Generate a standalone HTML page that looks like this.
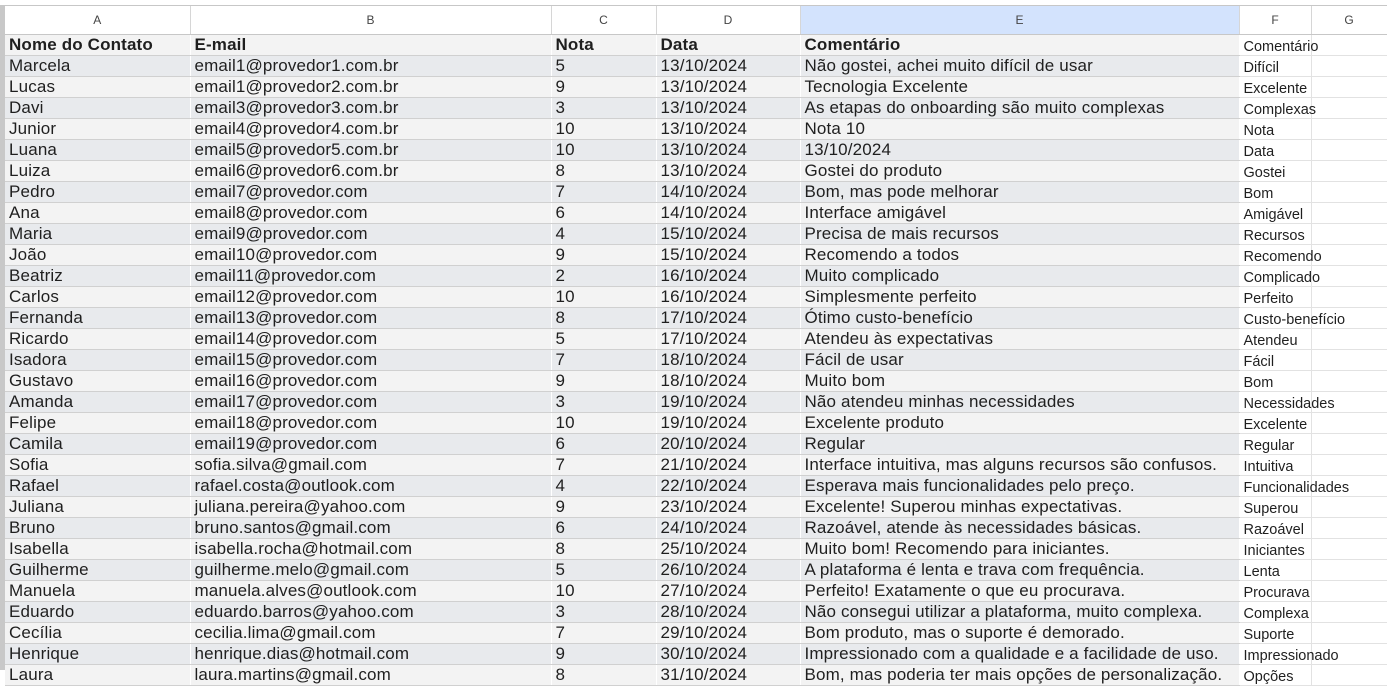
<!DOCTYPE html>
<html><head><meta charset="utf-8"><style>
body{margin:0;width:1387px;height:670px;overflow:hidden;background:#fff;font-family:"Liberation Sans",Arial,sans-serif;position:relative}
.strip{position:absolute;left:0;top:6px;width:5px;height:664px;background:#c8c8c8}
.top{position:absolute;left:0;top:5px;width:1387px;height:1px;background:#c7c7c7}
table{position:absolute;left:5px;top:6px;border-collapse:collapse;table-layout:fixed;width:1382px}
td{padding:0 0 0 4px;height:20px;border-bottom:1px solid #d0d0d0;border-right:1px solid #fff;white-space:nowrap;overflow:visible;font-size:17px;letter-spacing:0.15px;color:#1f1f1f;line-height:20px;box-sizing:content-box}
tr.h td{height:28px;font-size:12px;letter-spacing:0;color:#444;text-align:center;border-right:1px solid #d6d6d6;border-bottom:1px solid #c7c7c7;background:#fff;padding:0;line-height:28px}
tr.h td.sel{background:#d3e3fd}
tr.t td{background:#f3f3f3;font-weight:bold}
tr.o td{background:#e8eaed}
tr.e td{background:#f3f3f3}
td.f{background:#fff!important;font-size:14.5px;letter-spacing:0;font-weight:normal!important;border-bottom:1px solid #e2e2e2;border-right:1px solid #e2e2e2;line-height:20px}
td.f span{position:relative;top:2px}
td.g{background:#fff!important;border-bottom:1px solid #e2e2e2;border-right:none}
</style></head><body>
<div class="top"></div><div class="strip"></div>
<table>
<colgroup><col style="width:185px"><col style="width:361px"><col style="width:105px"><col style="width:144px"><col style="width:439px"><col style="width:72px"><col style="width:76px"></colgroup>
<tr class="h"><td>A</td><td>B</td><td>C</td><td>D</td><td class="sel">E</td><td>F</td><td>G</td></tr>
<tr class="t"><td>Nome do Contato</td><td>E-mail</td><td>Nota</td><td>Data</td><td>Comentário</td><td class="f"><span>Comentário</span></td><td class="g"></td></tr>
<tr class="o"><td>Marcela</td><td>email1@provedor1.com.br</td><td>5</td><td>13/10/2024</td><td>Não gostei, achei muito difícil de usar</td><td class="f"><span>Difícil</span></td><td class="g"></td></tr>
<tr class="e"><td>Lucas</td><td>email1@provedor2.com.br</td><td>9</td><td>13/10/2024</td><td>Tecnologia Excelente</td><td class="f"><span>Excelente</span></td><td class="g"></td></tr>
<tr class="o"><td>Davi</td><td>email3@provedor3.com.br</td><td>3</td><td>13/10/2024</td><td>As etapas do onboarding são muito complexas</td><td class="f"><span>Complexas</span></td><td class="g"></td></tr>
<tr class="e"><td>Junior</td><td>email4@provedor4.com.br</td><td>10</td><td>13/10/2024</td><td>Nota 10</td><td class="f"><span>Nota</span></td><td class="g"></td></tr>
<tr class="o"><td>Luana</td><td>email5@provedor5.com.br</td><td>10</td><td>13/10/2024</td><td>13/10/2024</td><td class="f"><span>Data</span></td><td class="g"></td></tr>
<tr class="e"><td>Luiza</td><td>email6@provedor6.com.br</td><td>8</td><td>13/10/2024</td><td>Gostei do produto</td><td class="f"><span>Gostei</span></td><td class="g"></td></tr>
<tr class="o"><td>Pedro</td><td>email7@provedor.com</td><td>7</td><td>14/10/2024</td><td>Bom, mas pode melhorar</td><td class="f"><span>Bom</span></td><td class="g"></td></tr>
<tr class="e"><td>Ana</td><td>email8@provedor.com</td><td>6</td><td>14/10/2024</td><td>Interface amigável</td><td class="f"><span>Amigável</span></td><td class="g"></td></tr>
<tr class="o"><td>Maria</td><td>email9@provedor.com</td><td>4</td><td>15/10/2024</td><td>Precisa de mais recursos</td><td class="f"><span>Recursos</span></td><td class="g"></td></tr>
<tr class="e"><td>João</td><td>email10@provedor.com</td><td>9</td><td>15/10/2024</td><td>Recomendo a todos</td><td class="f"><span>Recomendo</span></td><td class="g"></td></tr>
<tr class="o"><td>Beatriz</td><td>email11@provedor.com</td><td>2</td><td>16/10/2024</td><td>Muito complicado</td><td class="f"><span>Complicado</span></td><td class="g"></td></tr>
<tr class="e"><td>Carlos</td><td>email12@provedor.com</td><td>10</td><td>16/10/2024</td><td>Simplesmente perfeito</td><td class="f"><span>Perfeito</span></td><td class="g"></td></tr>
<tr class="o"><td>Fernanda</td><td>email13@provedor.com</td><td>8</td><td>17/10/2024</td><td>Ótimo custo-benefício</td><td class="f"><span>Custo-benefício</span></td><td class="g"></td></tr>
<tr class="e"><td>Ricardo</td><td>email14@provedor.com</td><td>5</td><td>17/10/2024</td><td>Atendeu às expectativas</td><td class="f"><span>Atendeu</span></td><td class="g"></td></tr>
<tr class="o"><td>Isadora</td><td>email15@provedor.com</td><td>7</td><td>18/10/2024</td><td>Fácil de usar</td><td class="f"><span>Fácil</span></td><td class="g"></td></tr>
<tr class="e"><td>Gustavo</td><td>email16@provedor.com</td><td>9</td><td>18/10/2024</td><td>Muito bom</td><td class="f"><span>Bom</span></td><td class="g"></td></tr>
<tr class="o"><td>Amanda</td><td>email17@provedor.com</td><td>3</td><td>19/10/2024</td><td>Não atendeu minhas necessidades</td><td class="f"><span>Necessidades</span></td><td class="g"></td></tr>
<tr class="e"><td>Felipe</td><td>email18@provedor.com</td><td>10</td><td>19/10/2024</td><td>Excelente produto</td><td class="f"><span>Excelente</span></td><td class="g"></td></tr>
<tr class="o"><td>Camila</td><td>email19@provedor.com</td><td>6</td><td>20/10/2024</td><td>Regular</td><td class="f"><span>Regular</span></td><td class="g"></td></tr>
<tr class="e"><td>Sofia</td><td>sofia.silva@gmail.com</td><td>7</td><td>21/10/2024</td><td>Interface intuitiva, mas alguns recursos são confusos.</td><td class="f"><span>Intuitiva</span></td><td class="g"></td></tr>
<tr class="o"><td>Rafael</td><td>rafael.costa@outlook.com</td><td>4</td><td>22/10/2024</td><td>Esperava mais funcionalidades pelo preço.</td><td class="f"><span>Funcionalidades</span></td><td class="g"></td></tr>
<tr class="e"><td>Juliana</td><td>juliana.pereira@yahoo.com</td><td>9</td><td>23/10/2024</td><td>Excelente! Superou minhas expectativas.</td><td class="f"><span>Superou</span></td><td class="g"></td></tr>
<tr class="o"><td>Bruno</td><td>bruno.santos@gmail.com</td><td>6</td><td>24/10/2024</td><td>Razoável, atende às necessidades básicas.</td><td class="f"><span>Razoável</span></td><td class="g"></td></tr>
<tr class="e"><td>Isabella</td><td>isabella.rocha@hotmail.com</td><td>8</td><td>25/10/2024</td><td>Muito bom! Recomendo para iniciantes.</td><td class="f"><span>Iniciantes</span></td><td class="g"></td></tr>
<tr class="o"><td>Guilherme</td><td>guilherme.melo@gmail.com</td><td>5</td><td>26/10/2024</td><td>A plataforma é lenta e trava com frequência.</td><td class="f"><span>Lenta</span></td><td class="g"></td></tr>
<tr class="e"><td>Manuela</td><td>manuela.alves@outlook.com</td><td>10</td><td>27/10/2024</td><td>Perfeito! Exatamente o que eu procurava.</td><td class="f"><span>Procurava</span></td><td class="g"></td></tr>
<tr class="o"><td>Eduardo</td><td>eduardo.barros@yahoo.com</td><td>3</td><td>28/10/2024</td><td>Não consegui utilizar a plataforma, muito complexa.</td><td class="f"><span>Complexa</span></td><td class="g"></td></tr>
<tr class="e"><td>Cecília</td><td>cecilia.lima@gmail.com</td><td>7</td><td>29/10/2024</td><td>Bom produto, mas o suporte é demorado.</td><td class="f"><span>Suporte</span></td><td class="g"></td></tr>
<tr class="o"><td>Henrique</td><td>henrique.dias@hotmail.com</td><td>9</td><td>30/10/2024</td><td>Impressionado com a qualidade e a facilidade de uso.</td><td class="f"><span>Impressionado</span></td><td class="g"></td></tr>
<tr class="e"><td>Laura</td><td>laura.martins@gmail.com</td><td>8</td><td>31/10/2024</td><td>Bom, mas poderia ter mais opções de personalização.</td><td class="f"><span>Opções</span></td><td class="g"></td></tr>
</table>
</body></html>
